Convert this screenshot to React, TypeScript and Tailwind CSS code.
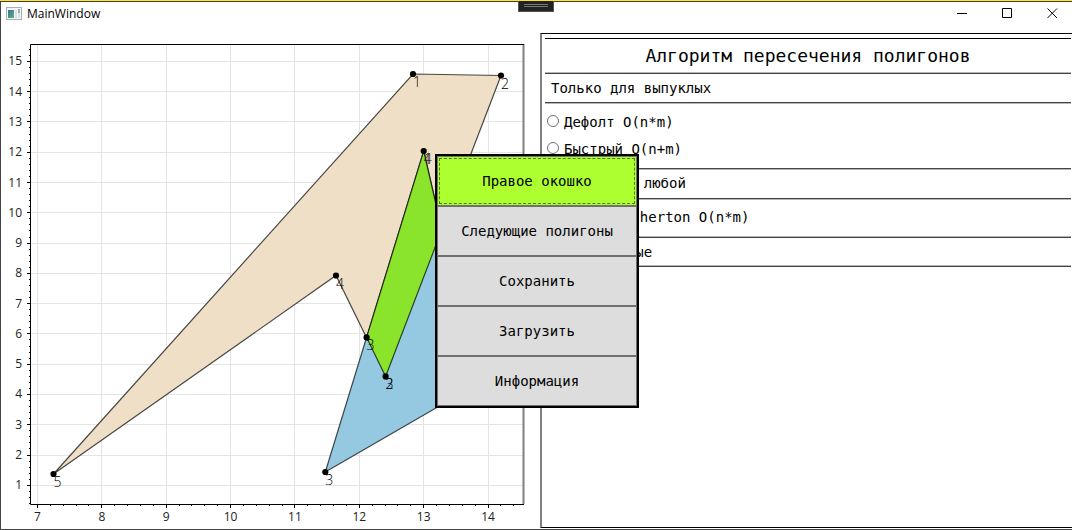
import React from "react";

const mono = "font-['DejaVu_Sans_Mono',monospace]";

const xAt = (v: number) => 37.5 + (v - 7) * 64.36;
const yAt = (v: number) => 485.3 - (v - 1) * 30.28;
const crisp = (v: number) => Math.floor(v) + 0.5;

const xTicks = [7, 8, 9, 10, 11, 12, 13, 14];
const yTicks = Array.from({ length: 15 }, (_, i) => i + 1);
const xMinor = Array.from({ length: 38 }, (_, i) => 7 + i * 0.2).filter((v) => xAt(v) < 523);
const yMinor = Array.from({ length: 80 }, (_, i) => 0.4 + i * 0.2).filter((v) => yAt(v) > 45);

const vertices: { x: number; y: number; labels: string[] }[] = [
  { x: 413, y: 74, labels: ["1"] },
  { x: 501, y: 75.5, labels: ["2"] },
  { x: 336, y: 275.5, labels: ["4"] },
  { x: 53.5, y: 474, labels: ["5"] },
  { x: 423.7, y: 151, labels: ["1", "4"] },
  { x: 385.6, y: 376.4, labels: ["3", "2"] },
  { x: 366.6, y: 337.4, labels: ["3"] },
  { x: 325.3, y: 472, labels: ["3"] },
  { x: 477.5, y: 384, labels: ["2"] },
];

function Chart() {
  return (
    <svg
      viewBox="1 28 539 501"
      className="block h-auto w-full font-['Open_Sans',sans-serif]"
      role="img"
      aria-label="Polygons"
    >
      <g stroke="#e4e4e4" strokeWidth="1">
        {xTicks.map((v) => (
          <line key={v} x1={crisp(xAt(v))} x2={crisp(xAt(v))} y1="45" y2="504" />
        ))}
        {yTicks.map((v) => (
          <line key={v} x1="31" x2="523" y1={crisp(yAt(v))} y2={crisp(yAt(v))} />
        ))}
      </g>
      <g stroke="#000" strokeOpacity="0.7" strokeWidth="1.2">
        <polygon points="413,74 501,75.5 385.6,376.4 336,275.5 53.5,474" fill="#efdfc6" />
        <polygon points="423.7,151 477.5,384 325.3,472" fill="#94c9e1" />
        <polygon points="423.7,151 441.8,229.8 385.6,376.4 366.6,337.4" fill="#8ae42c" />
      </g>
      <line x1="523.5" x2="523.5" y1="44" y2="504" stroke="#808080" strokeWidth="2" />
      <path d="M524 44.5H30.5V504.5H524" fill="none" stroke="#000" />
      <g stroke="#000" strokeWidth="1">
        {xMinor.map((v) => (
          <line key={v} x1={crisp(xAt(v))} x2={crisp(xAt(v))} y1="504" y2="506" />
        ))}
        {yMinor.map((v) => (
          <line key={v} x1="29" x2="30" y1={crisp(yAt(v))} y2={crisp(yAt(v))} />
        ))}
        {xTicks.map((v) => (
          <line key={v} x1={crisp(xAt(v))} x2={crisp(xAt(v))} y1="504" y2="508" />
        ))}
        {yTicks.map((v) => (
          <line key={v} x1="27" x2="30" y1={crisp(yAt(v))} y2={crisp(yAt(v))} />
        ))}
      </g>
      <g fontSize="12" fill="#222">
        {xTicks.map((v) => (
          <text key={v} x={xAt(v)} y="521" textAnchor="middle">{v}</text>
        ))}
        {yTicks.map((v) => (
          <text key={v} x="22" y={yAt(v) + 4} textAnchor="end">{v}</text>
        ))}
      </g>
      {vertices.map((p) => (
        <g key={`${p.x}-${p.y}`}>
          <circle cx={p.x} cy={p.y} r="3.1" />
          {p.labels.map((l) => (
            <text key={l} x={p.x + 4} y={p.y + 13} fontSize="14" fontWeight="300" textAnchor="middle">
              {l}
            </text>
          ))}
        </g>
      ))}
    </svg>
  );
}

function Option({ label }: { label: string }) {
  return (
    <label className="flex h-[27px] items-center gap-[5px] pl-[2px] text-[14px] leading-5">
      <input
        type="radio"
        name="algorithm"
        className="mb-px size-3 shrink-0 appearance-none rounded-full border border-[#707070] bg-white checked:bg-[#707070]"
      />
      {label}
    </label>
  );
}

function MenuItem({ label, active = false }: { label: string; active?: boolean }) {
  return (
    <button
      className={
        active
          ? "h-[50px] w-full border border-[#707070] bg-[#adff2f] p-px"
          : "h-[50px] w-full border border-[#707070] bg-[#dddddd] p-px"
      }
    >
      <span
        className={
          active
            ? "flex h-full items-center justify-center border border-dashed border-[#4f7a10]"
            : "flex h-full items-center justify-center"
        }
      >
        {label}
      </span>
    </button>
  );
}

export default function App() {
  return (
    <div className="relative min-h-screen overflow-hidden border-t border-[#ffe135] bg-white text-black">
      <div className="border-y border-l border-[#444444]">
        <header className="flex h-[26px] items-center pr-1 pl-[5px]">
          <svg viewBox="0 0 16 14" className="mb-[2px] h-[14px] w-4" aria-hidden="true">
            <defs>
              <linearGradient id="pane" x1="0" y1="0" x2="1" y2="1">
                <stop offset="0" stopColor="#3f6fa0" />
                <stop offset="1" stopColor="#5cb37c" />
              </linearGradient>
            </defs>
            <rect x="0.5" y="0.5" width="15" height="12" fill="#f3f4f4" stroke="#a9b0b5" />
            <rect x="2" y="3" width="6" height="8" fill="url(#pane)" />
            <rect x="9" y="3" width="2" height="8" fill="#dfe1e2" />
            <rect x="12" y="2" width="2" height="4" fill="#8fb5a8" />
            <rect x="12" y="6" width="2" height="5" fill="#e1e4e4" />
          </svg>
          <h1 className="mb-[2px] ml-[5px] font-['Open_Sans',sans-serif] text-[12px] leading-4">MainWindow</h1>
          <div className="mb-1 ml-auto flex gap-[13px]">
            <button aria-label="Minimize" className="flex h-5 w-8 items-center justify-center">
              <svg viewBox="0 0 11 11" className="size-[11px]" stroke="#000" fill="none"><path d="M0 5.5H10" /></svg>
            </button>
            <button aria-label="Maximize" className="flex h-5 w-8 items-center justify-center">
              <svg viewBox="0 0 11 11" className="size-[11px]" stroke="#000" fill="none"><path d="M.5.5H9.5V9.5H.5Z" /></svg>
            </button>
            <button aria-label="Close" className="flex h-5 w-8 items-center justify-center">
              <svg viewBox="0 0 11 11" className="size-[11px]" stroke="#000" fill="none"><path d="M.5.5L10 10M10 .5L.5 10" /></svg>
            </button>
          </div>
        </header>

        <main className="grid grid-cols-[539fr_532fr]">
          <Chart />
          <section className={`${mono} mt-[5px] mb-px border-y border-l-2 border-y-black border-l-[#808080] pt-1 pr-px pl-[3px] text-[14px] leading-5`}>
            <h2 className="flex h-9 items-center justify-center border-t border-b border-t-black border-b-[#444444] text-[18px] leading-6 shadow-[inset_0_-1px_#b5b5b5]">
              Алгоритм пересечения полигонов
            </h2>
            <h3 className="flex h-[29px] items-center border-b border-[#444444] pl-[6px] shadow-[0_1px_#b5b5b5]">
              Только для выпуклых
            </h3>
            <div className="h-[66px] border-b border-[#444444] pt-[5px] shadow-[0_1px_#b5b5b5]">
              <Option label="Дефолт O(n*m)" />
              <Option label="Быстрый O(n+m)" />
            </div>
            <h3 className="flex h-[30px] items-center border-b border-[#444444] pb-px pl-[6px] shadow-[0_1px_#b5b5b5]">
              Выпуклый и любой
            </h3>
            <div className="h-[39px] border-b border-[#444444] pt-[4px] shadow-[inset_0_-1px_#b5b5b5]">
              <Option label="Weiler-Atherton O(n*m)" />
            </div>
            <h3 className="flex h-[29px] items-center border-b border-[#444444] pb-px pl-[6px] shadow-[inset_0_-1px_#b5b5b5]">
              Произвольные
            </h3>
          </section>
        </main>
      </div>

      <div className="absolute -top-px left-[518px] flex h-3 w-9 flex-col gap-px border border-t-0 border-[#555555] bg-[#222222] px-[5px] pt-1">
        <span className="h-px bg-[#777777]" />
        <span className="h-px bg-[#777777]" />
      </div>

      <nav className={`${mono} absolute top-[153px] left-[435px] flex w-[204px] flex-col border-2 border-black text-[14px] leading-5`}>
        <MenuItem label="Правое окошко" active />
        <MenuItem label="Следующие полигоны" />
        <MenuItem label="Сохранить" />
        <MenuItem label="Загрузить" />
        <MenuItem label="Информация" />
      </nav>
    </div>
  );
}
